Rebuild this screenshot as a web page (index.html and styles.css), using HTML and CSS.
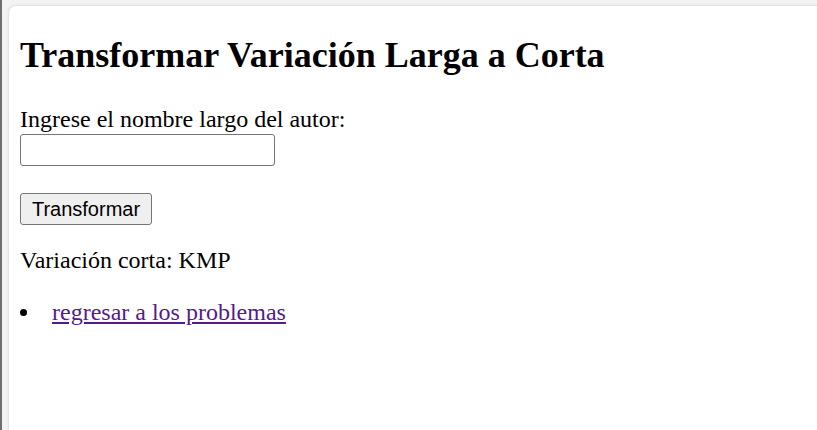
FILE: index.html
```html
<!DOCTYPE html>
<html lang="es">
<head>
<meta charset="utf-8">
<title>Transformar Variación Larga a Corta</title>
<link rel="stylesheet" href="styles.css">
</head>
<body>
<div class="frame">
  <div class="edge"></div>
  <div class="outer">
    <main class="card">
      <h1 class="title">Transformar Variación Larga a Corta</h1>
      <form class="form">
        <label class="label" for="nombre">Ingrese el nombre largo del autor:</label>
        <input class="input" id="nombre" type="text">
        <button class="btn" type="button">Transformar</button>
      </form>
      <p class="result">Variación corta: KMP</p>
      <ul class="links">
        <li class="item"><span class="dot"></span><a class="link" href="#">regresar a los problemas</a></li>
      </ul>
    </main>
  </div>
</div>
</body>
</html>
```

FILE: styles.css
```css
html, body {
  margin: 0;
  padding: 0;
  height: 100%;
  overflow: hidden;
}
body {
  background: #f3f3f3;
  font-family: "Liberation Serif", "Times New Roman", serif;
  font-size: 24px;
  color: #000;
}
.frame {
  display: flex;
  height: 100%;
}
.edge {
  width: 2px;
  flex: 0 0 2px;
  background: #6f6f6f;
}
.outer {
  flex: 1;
  padding: 5px 0 0 6px;
  display: flex;
}
.card {
  flex: 1;
  background: #fff;
  border-top-left-radius: 8px;
  border-top: 1px solid #e4e4e4;
  border-left: 1px solid #e4e4e4;
  box-shadow: 0 0 3px rgba(0,0,0,0.06);
  padding: 29px 0 0 11px;
}
.title {
  margin: 0;
  font-size: 36px;
  font-weight: bold;
  line-height: 41px;
}
.form {
  margin: 29px 0 0 0;
  display: flex;
  flex-direction: column;
  align-items: flex-start;
}
.label {
  display: block;
  line-height: 28px;
}
.input {
  box-sizing: border-box;
  width: 255px;
  height: 32px;
  margin: 1px 0 0 0;
  border: 1px solid #767676;
  border-radius: 3px;
  padding: 2px 4px;
  font-family: "Liberation Sans", Arial, sans-serif;
  font-size: 20px;
  background: #fff;
}
.btn {
  box-sizing: border-box;
  margin: 27px 0 0 0;
  height: 32px;
  width: 132px;
  padding: 0;
  border: 1px solid #767676;
  border-radius: 3px;
  background: #efefef;
  font-family: "Liberation Sans", Arial, sans-serif;
  font-size: 20px;
  color: #000;
}
.result {
  margin: 21px 0 0 0;
  line-height: 28px;
}
.links {
  list-style: none;
  margin: 24px 0 0 0;
  padding: 0;
}
.item {
  display: flex;
  align-items: center;
  line-height: 28px;
}
.dot {
  width: 7px;
  height: 7px;
  border-radius: 50%;
  background: #000;
  margin: 0 25px 0 0;
}
.link {
  color: #551a8b;
  text-decoration: underline;
}
```
